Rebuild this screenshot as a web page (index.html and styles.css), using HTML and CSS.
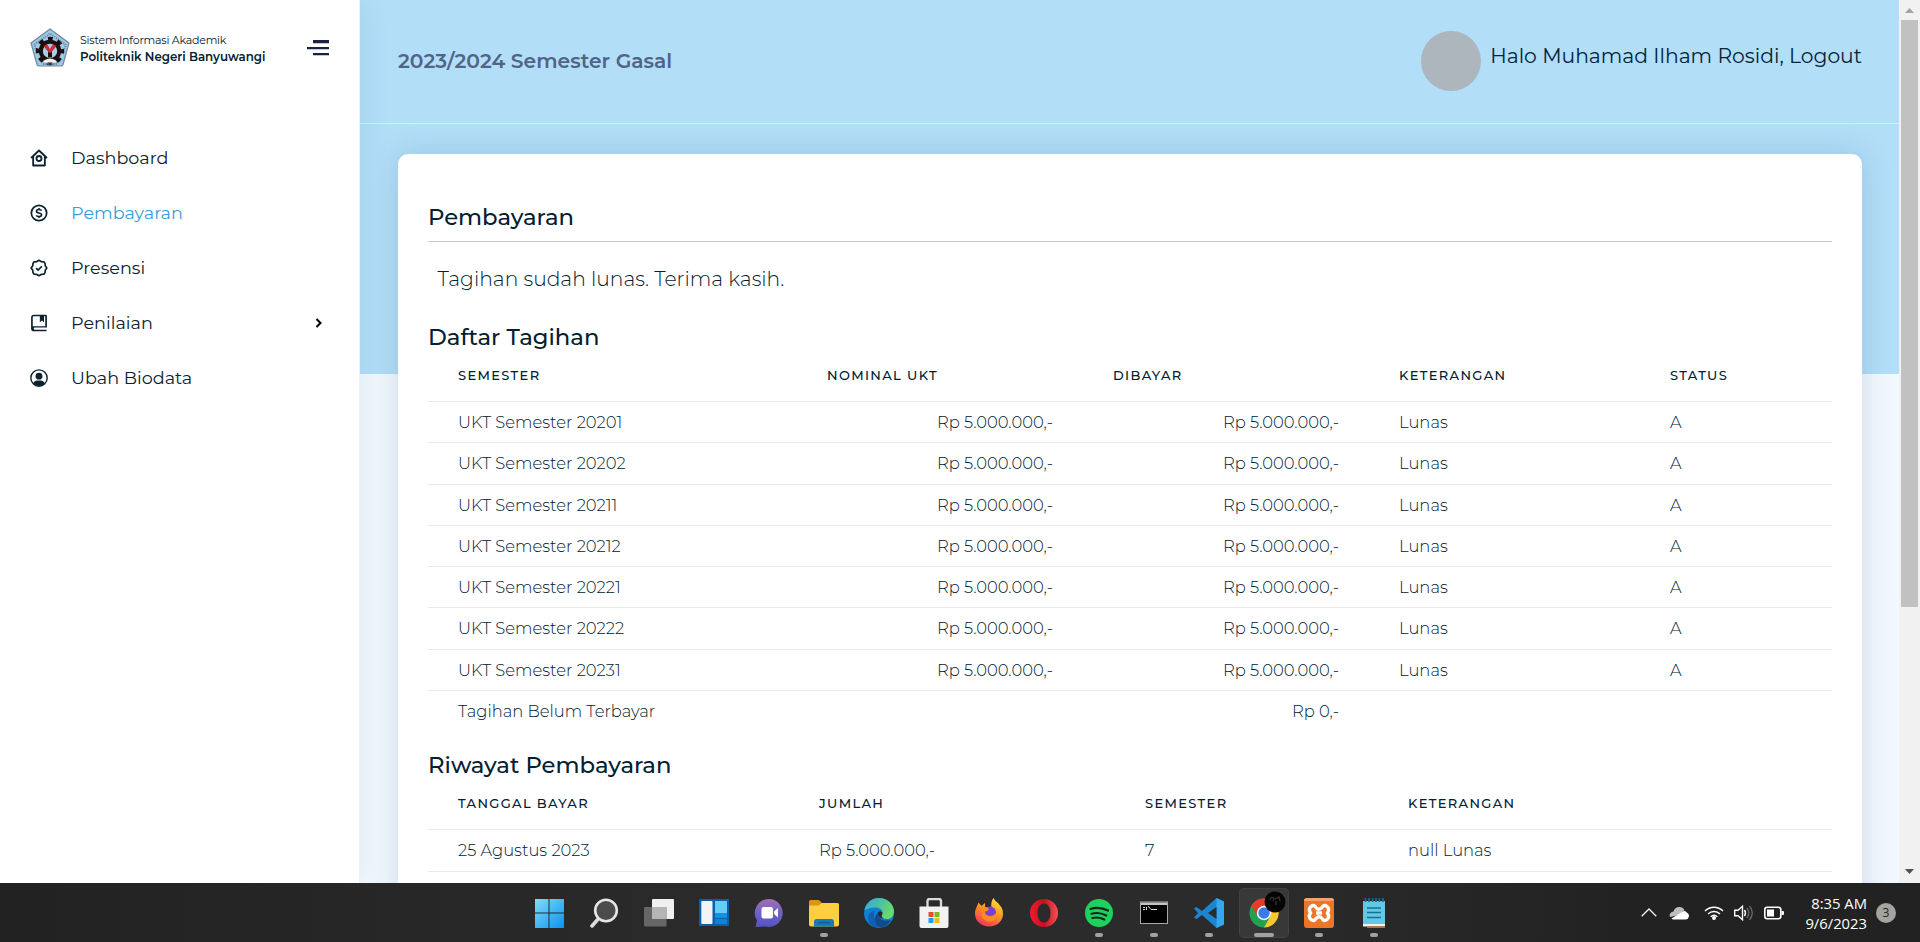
FILE: index.html
```html
<!DOCTYPE html>
<html lang="id">
<head>
<meta charset="utf-8">
<title>Pembayaran</title>
<link rel="stylesheet" href="styles.css">
</head>
<body>
<div class="window">
  <aside class="sidebar">
    <div class="brand">
      <svg class="logo" viewBox="0 0 40 39">
        <path d="M20 1 39 15 33 36.500Q32.500 38 31 38H9Q7.500 38 7 36.500L1 15Z" fill="#9cc9e6" stroke="#6f8798" stroke-width="1.200"/>
        <path d="M5.500 21 4.500 16.500 20 5.500 35.500 16.500 34.500 21" fill="none" stroke="#6b8da6" stroke-width="1.800" stroke-dasharray="1.300 .9"/>
        <circle cx="20" cy="23" r="12" fill="none" stroke="#1c0f12" stroke-width="4.500" stroke-dasharray="4.700 4.725" stroke-dashoffset="2.350"/>
        <circle cx="20" cy="23" r="9.200" fill="#a9cfe8" stroke="#1c0f12" stroke-width="4"/>
        <path d="M15 18l4 4.500v7M25 18l-4 4.500v7" stroke="#1c0f12" stroke-width="2" fill="none"/>
        <path d="M14 18l3-2 2.500 4-2 3zM26 18l-3-2-2.500 4 2 3z" fill="#cf2d36"/>
        <circle cx="20" cy="22.500" r="2.200" fill="#cf2d36"/>
        <path d="M14 32.500q6-4 12 0v2H14z" fill="#f3ede6"/>
        <path d="M13 36h14" stroke="#56738a" stroke-width="1.400" stroke-dasharray="1.500 1"/>
      </svg>
      <div class="brand-text">
        <div class="brand-top">Sistem Informasi Akademik</div>
        <div class="brand-name">Politeknik Negeri Banyuwangi</div>
      </div>
      <svg class="burger" viewBox="0 0 22 16"><path d="M6 0h16v3.200H6zM0 7h22v2.200H0zM6 13h16v2.200H6z" fill="#1b2145"/></svg>
    </div>
    <nav class="nav">
      <a class="nav-item"><svg viewBox="0 0 24 24"><path d="M2.500 12 12 3l9.500 9M5 10.500V21h14V10.500" fill="none" stroke="currentColor" stroke-width="2.200" stroke-linejoin="round"/><circle cx="12" cy="12.600" r="3" fill="none" stroke="currentColor" stroke-width="2.200"/></svg><span>Dashboard</span></a>
      <a class="nav-item active"><svg viewBox="0 0 24 24" fill="none" stroke="currentColor"><circle cx="12" cy="12" r="9.200" stroke-width="2.100"/><path d="M15 9.300C14.600 8.300 13.500 7.800 12 7.800c-1.800 0-3 .8-3 2s1 1.800 3 2.200 3.100 1 3.100 2.200-1.300 2.100-3.100 2.100c-1.600 0-2.800-.6-3.200-1.700M12 6v2M12 16v2" stroke-width="1.900"/></svg><span>Pembayaran</span></a>
      <a class="nav-item"><svg viewBox="0 0 24 24" fill="none" stroke="currentColor" stroke-width="2" stroke-linejoin="round"><path d="M12 2.700 14.600 4.300 17.800 4.600 19.300 6.600 19.500 9.300 21.400 12 19.500 14.700 19.300 17.400 17.800 19.400 14.600 19.700 12 21.300 9.400 19.700 6.200 19.400 4.700 17.400 4.500 14.700 2.600 12 4.500 9.300 4.700 6.600 6.200 4.600 9.400 4.300Z"/><path d="m8.500 12.200 2.400 2.300 4.600-4.600"/></svg><span>Presensi</span></a>
      <a class="nav-item"><svg viewBox="0 0 24 24"><path d="M6 2a3.500 3.500 0 0 0-3.500 3.500v13A3.500 3.500 0 0 0 6 22h15v-2H6.500a1.500 1.500 0 0 1 0-2.500H21.500V3.500A1.500 1.500 0 0 0 20 2Zm-1.500 13.800V5a1 1 0 0 1 1-1H13v7l2.500-2 2.500 2V4h1.500v11.800Z" fill="currentColor" fill-rule="evenodd"/></svg><span>Penilaian</span><svg class="chevron" viewBox="0 0 8 10"><path d="m1.500 1 4 4-4 4" fill="none" stroke="#000" stroke-width="2"/></svg></a>
      <a class="nav-item"><svg viewBox="0 0 24 24"><circle cx="12" cy="12" r="9.800" fill="none" stroke="currentColor" stroke-width="1.700"/><circle cx="12" cy="9.800" r="4.100" fill="currentColor"/><path d="M5 18.500q1.500-3.500 5-3.500h4q3.500 0 5 3.500-3 3-7 3t-7-3Z" fill="currentColor"/></svg><span>Ubah Biodata</span></a>
    </nav>
  </aside>

  <main class="main">
    <header class="header">
      <div class="period">2023/2024 Semester Gasal</div>
      <div class="user"><span class="avatar"></span><span class="hello">Halo Muhamad Ilham Rosidi, Logout</span></div>
    </header>
    <section class="card">
      <h1 class="title page-title">Pembayaran</h1>
      <p class="notice">Tagihan sudah lunas. Terima kasih.</p>

      <h2 class="title">Daftar Tagihan</h2>
      <div class="table bills">
        <div class="row head"><span>SEMESTER</span><span>NOMINAL UKT</span><span>DIBAYAR</span><span>KETERANGAN</span><span>STATUS</span></div>
        <div class="row"><span>UKT Semester 20201</span><span class="num">Rp 5.000.000,-</span><span class="num">Rp 5.000.000,-</span><span>Lunas</span><span>A</span></div>
        <div class="row"><span>UKT Semester 20202</span><span class="num">Rp 5.000.000,-</span><span class="num">Rp 5.000.000,-</span><span>Lunas</span><span>A</span></div>
        <div class="row"><span>UKT Semester 20211</span><span class="num">Rp 5.000.000,-</span><span class="num">Rp 5.000.000,-</span><span>Lunas</span><span>A</span></div>
        <div class="row"><span>UKT Semester 20212</span><span class="num">Rp 5.000.000,-</span><span class="num">Rp 5.000.000,-</span><span>Lunas</span><span>A</span></div>
        <div class="row"><span>UKT Semester 20221</span><span class="num">Rp 5.000.000,-</span><span class="num">Rp 5.000.000,-</span><span>Lunas</span><span>A</span></div>
        <div class="row"><span>UKT Semester 20222</span><span class="num">Rp 5.000.000,-</span><span class="num">Rp 5.000.000,-</span><span>Lunas</span><span>A</span></div>
        <div class="row"><span>UKT Semester 20231</span><span class="num">Rp 5.000.000,-</span><span class="num">Rp 5.000.000,-</span><span>Lunas</span><span>A</span></div>
        <div class="row"><span>Tagihan Belum Terbayar</span><span></span><span class="num">Rp 0,-</span><span></span><span></span></div>
      </div>

      <h2 class="title">Riwayat Pembayaran</h2>
      <div class="table history">
        <div class="row head"><span>TANGGAL BAYAR</span><span>JUMLAH</span><span>SEMESTER</span><span>KETERANGAN</span></div>
        <div class="row"><span>25 Agustus 2023</span><span>Rp 5.000.000,-</span><span>7</span><span>null Lunas</span></div>
        <div class="row"></div>
      </div>
    </section>
  </main>

  <div class="scrollbar">
    <svg class="arrow" viewBox="0 0 9 5"><path d="M0 5 4.500 0 9 5Z" fill="#a3a3a3"/></svg>
    <div class="thumb"></div>
    <svg class="arrow" viewBox="0 0 9 5"><path d="M0 0h9L4.500 5Z" fill="#505050"/></svg>
  </div>
</div>

<footer class="taskbar">
  <div class="apps">
    <div class="app"><svg viewBox="0 0 30 30"><defs><linearGradient id="win" x1="0" y1="0" x2="1" y2="1"><stop offset="0" stop-color="#7fdcfb"/><stop offset="1" stop-color="#0a93f0"/></linearGradient></defs><path d="M1 1h13.500v13.500H1zM15.500 1H30v13.500H15.500zM1 15.500h13.500V30H1zM15.500 15.500H30V30H15.500z" fill="url(#win)"/></svg></div>
    <div class="app"><svg viewBox="0 0 30 30"><path d="M10 20 3 28" stroke="#dcdcdc" stroke-width="3.500" stroke-linecap="round"/><circle cx="17" cy="12.500" r="10.800" fill="#4c4c4c" stroke="#e6e6e6" stroke-width="2.600"/></svg></div>
    <div class="app"><svg viewBox="0 0 30 30"><rect x="8" y="1" width="22" height="20" rx="1" fill="#f0f0f0"/><rect x="0" y="9" width="22.500" height="19.500" rx="1" fill="#666"/><path d="M8 9h14.500v12H8z" fill="#b5b5b5"/></svg></div>
    <div class="app"><svg viewBox="0 0 30 30"><rect x="0" y="1" width="30" height="27" rx="1" fill="#0d5fae"/><rect x="2.300" y="3" width="11.200" height="23" rx="1" fill="#f4f4f4"/><path d="M16 3h12v12H16z" fill="#66cdf8"/><path d="M16 15h12v5H16z" fill="#1490df"/><path d="M16 21h12v5H16z" fill="#0d82d6"/></svg></div>
    <div class="app"><svg viewBox="0 0 30 30"><defs><linearGradient id="chat" x1="0" y1="0" x2="0" y2="1"><stop offset="0" stop-color="#a66fb0"/><stop offset=".5" stop-color="#6b62c8"/><stop offset="1" stop-color="#5654c4"/></linearGradient></defs><path d="M15 1a14 14 0 1 1-4 27.500L1.500 29 3 22.500A14 14 0 0 1 15 1Z" fill="url(#chat)"/><rect x="7.500" y="9" width="11.500" height="11.500" rx="2" fill="#fff"/><path d="M20 13.500l4-3.500v9.500l-4-3.500z" fill="#fff"/></svg></div>
    <div class="app running"><svg viewBox="0 0 30 30"><path d="M0 3.500Q0 2 1.500 2H9q1.500 0 2.500 1.500L13 5v6H0Z" fill="#d9970f"/><path d="M0 7.500h9.500L13 5h15.500Q30 5 30 6.500v20q0 2-2 2H2q-2 0-2-2Z" fill="#fccf43"/><path d="M5 28.500V24q0-3 3-3h14q3 0 3 3v4.500Z" fill="#1879c0"/><path d="M9 24.700h12" stroke="#0c5596" stroke-width="1.200"/></svg></div>
    <div class="app"><svg viewBox="0 0 30 30"><defs><linearGradient id="edge" x1="0" y1="0" x2="1" y2=".5"><stop offset="0" stop-color="#31a5e4"/><stop offset="1" stop-color="#67dc67"/></linearGradient></defs><circle cx="15" cy="15" r="15" fill="#0f7fd4"/><path d="M0.500 12C2 4.500 8 0 15 0c9 0 15 6.500 15 13.500 0 5-3.500 7.500-7 7.500-3.500 0-5.500-1.500-5.500-3 0-1 1-1.500 1-3.500 0-3-3.500-5-7-5-5 0-9 2-11 2.500Z" fill="url(#edge)"/><path d="M10.500 13c-2 7 2.500 14.500 9.500 16-9 2.500-16-2-16-9 0-3.500 3-6.500 6.500-7Z" fill="#105fb0"/><path d="M14 14.500c-.5 6 5 9.500 13 7.500-2 4-6 7-10 7.500-6-1.500-8.500-10-3-15Z" fill="#134b8a"/><path d="M14 14q3-2 4.500 1-.5 3-1 3 .5 1.500 2 2.500-6-.5-5.500-6.500Z" fill="#2b2b2b"/></svg></div>
    <div class="app"><svg viewBox="0 0 30 30"><path d="M8.500 10V3q0-2 2-2h9.500q2 0 2 2v7" fill="none" stroke="#dcdcdc" stroke-width="2.300"/><path d="M.500 8.500h29V28q0 2-2 2h-25q-2 0-2-2Z" fill="#f2f2f2"/><path d="M9.500 14h5v5h-5z" fill="#e8502b"/><path d="M15.500 14h5v5h-5z" fill="#7fb81a"/><path d="M9.500 20h5v5h-5z" fill="#209fe6"/><path d="M15.500 20h5v5h-5z" fill="#fbb714"/></svg></div>
    <div class="app"><svg viewBox="0 0 30 30"><defs><linearGradient id="fox" x1=".8" y1="0" x2=".3" y2="1"><stop offset="0" stop-color="#ffe63f"/><stop offset=".45" stop-color="#ff9a22"/><stop offset="1" stop-color="#f5315a"/></linearGradient></defs><path d="M4.500 4.500 7.500 8l3.500-3v4h6.500Q16.500 4 19.500 0q2 4 5 5.500l1 1.500Q29 10 29 16c0 7-6 12.500-14 12.500S1 23 1 15.500C1 11 3 9 4.500 4.500Z" fill="url(#fox)"/><circle cx="16" cy="14.500" r="6" fill="#7a3fd6"/><path d="M7 10q5-2.500 8 1-1 2.500-4 2.500 0 4 5 4.500 5 0 5-3 3 4-.5 7Q13 26 8 19Z" fill="#ff8b25"/></svg></div>
    <div class="app"><svg viewBox="0 0 30 30"><defs><linearGradient id="opera" x1="0" y1="0" x2="1" y2="0"><stop offset="0" stop-color="#f01a30"/><stop offset=".5" stop-color="#c5101f"/><stop offset="1" stop-color="#f55353"/></linearGradient></defs><path d="M15 1a14 14 0 1 1 0 28 14 14 0 0 1 0-28Zm0 4.500c-4 0-6.500 4-6.500 9.500s2.500 9.500 6.500 9.500 6.500-4 6.500-9.500S19 5.500 15 5.500Z" fill="url(#opera)" fill-rule="evenodd"/></svg></div>
    <div class="app running"><svg viewBox="0 0 30 30"><circle cx="15" cy="15" r="14" fill="#1ed05e"/><path d="M6.500 11q9-2.700 17.500 1.600M7.500 15.700q7.800-2 14.700 1.800M8.300 20q6.400-1.500 12 1.500" fill="none" stroke="#14261a" stroke-width="2.200" stroke-linecap="round"/></svg></div>
    <div class="app running"><svg viewBox="0 0 30 30"><rect x="1.500" y="4" width="27" height="21.500" fill="#000" stroke="#a8a8a8"/><path d="M2 4.500h26v2.500H2z" fill="#c4c4c4"/><path d="M4 9.500h2M4 11.500h2M7.500 9v3M9 8l3 3.500h6" stroke="#ddd" fill="none"/></svg></div>
    <div class="app running"><svg viewBox="0 0 30 30"><path d="M22.500 0 30 3.500v23L22.500 30 8 17l-5.500 4L0 19.500 4 15 0 10.500 2.500 9 8 13Z" fill="#1b86cf"/><path d="M22.500 0 30 3.500v23L22.500 30Z" fill="#34a8ee"/><path d="M22.500 9v12L14 15Z" fill="#2b2b2b"/></svg></div>
    <div class="app running current"><svg viewBox="0 0 30 30"><circle cx="15" cy="15" r="14.500" fill="#22a152"/><path d="M2.440 7.750A14.500 14.500 0 0 1 27.560 7.750H15L8.700 18.600Z" fill="#e33b2e"/><path d="M27.560 7.750A14.500 14.500 0 0 1 15 29.500L21.300 18.600 15 7.750Z" fill="#fcc72a"/><circle cx="15" cy="15" r="7.200" fill="#fff"/><circle cx="15" cy="15" r="5.700" fill="#3a7bea"/></svg><svg class="profile" viewBox="0 0 22 22"><circle cx="11" cy="11" r="10.500" fill="#050505"/><path d="M6 9q1-4 4-2l-1 3M11 8l4-2 1 4M12 10v4" stroke="#333" fill="none" stroke-width="1.300"/></svg></div>
    <div class="app running"><svg viewBox="0 0 30 30"><rect width="30" height="30" rx="3" fill="#ee7426"/><path d="M0 3q0-3 3-3h24q3 0 3 3Z" fill="#f4a373"/><path d="M7 8.500q3-2.500 5 1t6 0q2-3.500 5-1t.5 6.500q2.500 4-.5 6.500t-5-1-6 0q-2 3.500-5 1T6.500 15Q4 11 7 8.500ZM12 15h6" fill="none" stroke="#fff" stroke-width="3.400"/></svg></div>
    <div class="app running"><svg viewBox="0 0 30 30"><path d="M4 3h22v24H4z" fill="#63c8e8"/><path d="M4 26h22v2.500H4z" fill="#f1f1f1"/><path d="M8 28.500h18V30H8z" fill="#c86a1c"/><path d="M6.500 0v4M10 0v4M13.500 0v4M17 0v4M20.500 0v4M24 0v4" stroke="#176d93" stroke-width="1.700"/><path d="M8 10h14M8 14.500h14M8 19.500h14" stroke="#15718f" stroke-width="1.700"/></svg></div>
  </div>
  <div class="tray">
    <svg width="16" height="9" viewBox="0 0 16 9"><path d="M.700 8.300 8 1l7.300 7.300" fill="none" stroke="#f2f2f2" stroke-width="1.300"/></svg>
    <svg class="cloud" width="21" height="14" viewBox="0 0 21 14"><path d="M1 11a4 4 0 0 1 3.500-5.500A6 6 0 0 1 15.500 4L10 9Z" fill="#bdbdbd"/><path d="M2.500 12.500 13 6q3-2.500 5 .7a3.600 3.600 0 0 1-1.500 6.800H4.500Q3 13.500 2.500 12.500Z" fill="#fff"/></svg>
    <svg class="wifi" width="20" height="15" viewBox="0 0 20 15"><path d="M1 6a12.500 12.500 0 0 1 18 0M4 9a8.500 8.500 0 0 1 12 0M6.700 11.700a5 5 0 0 1 6.600 0" fill="none" stroke="#fff" stroke-width="1.500"/><circle cx="10" cy="13" r="2" fill="#fff"/></svg>
    <svg class="sound" width="20" height="16" viewBox="0 0 20 16" fill="none"><path d="M.700 5.300H4l4.500-4v13.400L4 10.700H.700Z" stroke="#fff" stroke-width="1.400"/><path d="M10.500 5q2 3 0 6" stroke="#fff" stroke-width="1.400"/><path d="M13 3q3.500 5 0 10M15.500 1q5.500 7 0 14" stroke="#666" stroke-width="1.400"/></svg>
    <svg class="battery" width="20" height="14" viewBox="0 0 20 14"><rect x=".800" y="1.300" width="16" height="11.400" rx="2.500" fill="none" stroke="#fff" stroke-width="1.600"/><path d="M3 3.500h7v7H3zM17.500 5H19q1 0 1 1v2q0 1-1 1h-1.500z" fill="#fff"/></svg>
    <div class="clock"><div>8:35 AM</div><div>9/6/2023</div></div>
    <div class="badge">3</div>
  </div>
</footer>
</body>
</html>
```
FILE: styles.css
```css
* { box-sizing: border-box; }
body {
  margin: 0;
  height: 942px;
  overflow: hidden;
  display: flex;
  flex-direction: column;
  font-family: Montserrat, Inter, "Liberation Sans", sans-serif;
  color: #012030;
}
svg { display: block; flex: none; }
.window { height: 883px; flex: none; display: flex; overflow: hidden; }

/* sidebar */
.sidebar {
  width: 360px;
  flex: none;
  position: relative;
  z-index: 1;
  background: #fff;
  border-right: 1px solid #f0f1f3;
  box-shadow: 0 0 28px rgba(50, 80, 110, .1);
}
.brand { display: flex; align-items: flex-start; padding: 28px 30px 0; height: 130px; }
.logo { width: 40px; height: 39px; }
.brand-text { margin-left: 10px; padding-top: 4px; flex: 1; line-height: 17px; white-space: nowrap; }
.brand-top { font-weight: 400; font-size: 11px; letter-spacing: -.220px; }
.brand-name { font-weight: 600; font-size: 11.830px; }
.burger { width: 22px; height: 16px; margin-top: 12px; }
.nav-item {
  height: 55.100px;
  display: flex;
  align-items: center;
  padding: 0 36px 0 29px;
  font-size: 17.600px;
  color: #0d2230;
}
.nav-item > svg { width: 20px; height: 20px; }
.nav-item span { margin-left: 22px; flex: 1; }
.nav-item.active span { color: #3a9ddc; }
.nav-item .chevron { width: 8px; height: 10px; }

/* main column */
.main {
  flex: 1;
  min-width: 0;
  background: linear-gradient(#b2def8 374px, #f1f8ff 374px);
}
.header {
  height: 124px;
  border-bottom: 1px solid #dceafa;
  padding: 0 37px 0 38px;
  display: flex;
  justify-content: space-between;
}
.period { font-size: 20.300px; font-weight: 600; line-height: 30px; padding-top: 46px; color: #4f6486; }
.user { display: flex; padding-top: 31px; }
.avatar { width: 60px; height: 60px; border-radius: 50%; background: #adb5bd; }
.hello { margin-left: 9px; padding-top: 10px; font-size: 20.300px; line-height: 30px; color: #04243a; }
.card {
  margin: 30px 37px 0 38px;
  height: 900px;
  padding: 47px 30px 0;
  background: #fff;
  border-radius: 10px;
  box-shadow: 0 0 30px rgba(50, 80, 110, .18);
}
.title { margin: 0; font-size: 22.750px; font-weight: 500; line-height: 32px; }
.page-title { padding-bottom: 8px; border-bottom: 1px solid #c6c8ca; }
.notice { margin: 22px 0 27px; padding-left: 9.500px; font-size: 20.250px; font-weight: 300; line-height: 30px; }

/* tables */
.table { display: grid; grid-template-rows: 49px; grid-auto-rows: 41.300px; margin-bottom: 17px; }
.row { display: grid; border-bottom: 1px solid #e8e9ea; font-size: 16.370px; font-weight: 300; line-height: 41px; }
.bills .row { grid-template-columns: 369px 286px 286px 271px 192px; }
.history .row { grid-template-columns: 361px 326px 263px 454px; }
.bills .row:last-child { border-bottom: 0; }
.row span { padding: 0 30px; }
.row .num { text-align: right; }
.row.head { font-size: 13px; font-weight: 500; letter-spacing: 1.350px; line-height: 20px; padding-top: 12px; }

/* page scrollbar */
.scrollbar {
  width: 21px;
  flex: none;
  background: #f1f1f2;
  padding: 8px 2px 9px;
  display: flex;
  flex-direction: column;
}
.arrow { width: 9px; height: 5px; align-self: center; }
.thumb { height: 587px; margin-top: 7px; margin-bottom: auto; background: #c1c1c1; }

/* taskbar */
.taskbar { height: 59px; display: flex; background: linear-gradient(90deg, #222, #2b2b2b 40%, #2b2b2b 65%, #222 85%); }
.apps { margin-left: 521px; display: flex; padding-top: 5px; }
.app {
  width: 50px;
  height: 50px;
  margin: 0 2.530px;
  position: relative;
  display: flex;
  flex-direction: column;
  align-items: center;
  padding-top: 10px;
  border-radius: 5px;
}
.app svg { width: 30px; height: 30px; }
.running::after { content: ""; width: 8px; height: 4px; margin-top: 5px; border-radius: 2px; background: #a2a2a2; }
.current { background: #383838; box-shadow: inset 0 0 0 1px #414141; }
.current::after { width: 20px; }
.app .profile { position: absolute; left: 25px; top: 3px; width: 22px; height: 22px; }
.tray { margin-left: auto; margin-right: 24px; display: flex; align-items: center; color: #fff; }
.cloud { margin-left: 12px; }
.wifi { margin-left: 14px; }
.sound { margin-left: 10px; }
.battery { margin-left: 10px; }
.clock { width: 83px; text-align: right; font: 14.800px/20px "Open Sans", sans-serif; }
.badge { width: 20px; height: 20px; margin-left: 9px; border-radius: 50%; background: #a3a39f; color: #222; font: 12px/20px "Open Sans", sans-serif; text-align: center; }
```
